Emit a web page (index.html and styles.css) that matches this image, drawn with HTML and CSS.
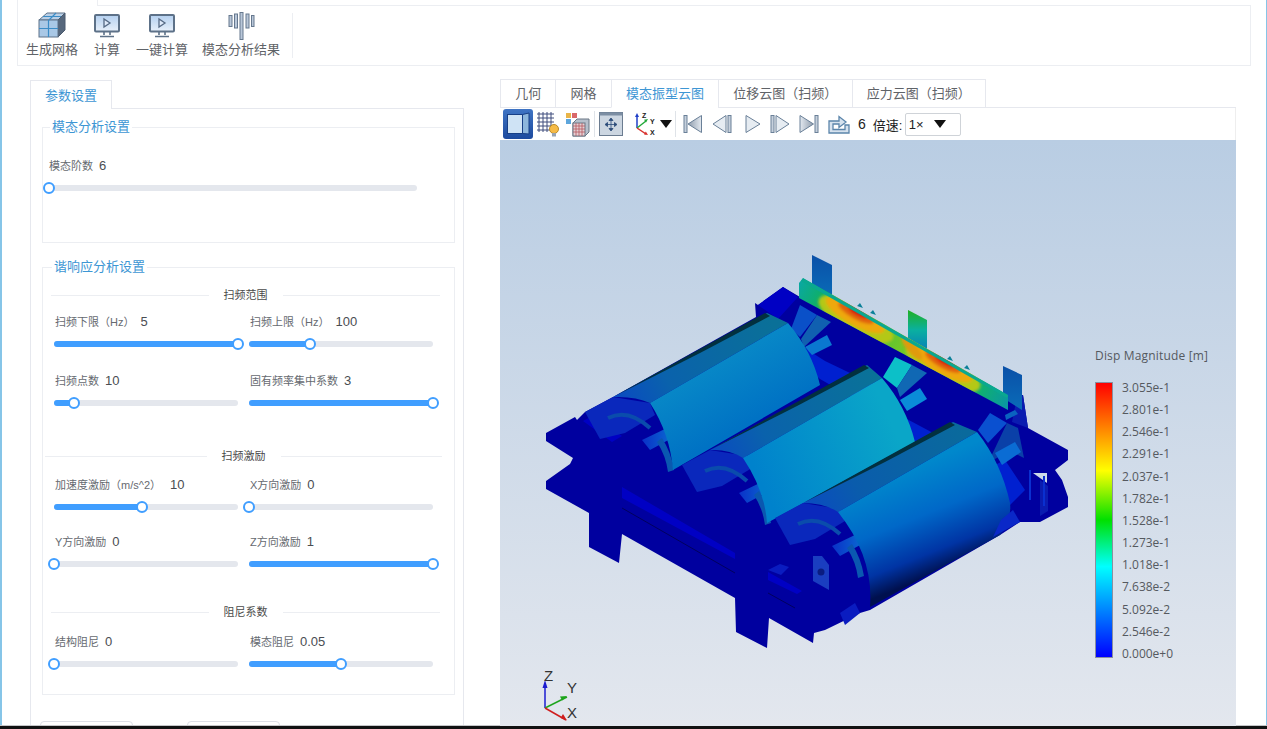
FILE: index.html
```html
<!DOCTYPE html>
<html lang="zh-CN">
<head>
<meta charset="utf-8">
<title>模态分析</title>
<link rel="stylesheet" href="styles.css">
</head>
<body>
<div class="screen">
<div class="app">
  <header class="ribbon-wrap">
    <div class="ribbon-head"><div class="stub"></div><div class="stub-rest"></div></div>
    <div class="ribbon">
      <div class="tool">
        <svg class="tool-icon" width="28" height="26" viewBox="0 0 28 26"><path d="M1 8 9 1h18l-7 7z" fill="#b9cfe6" stroke="#5f7389"/><path d="M20 8l7-7v17l-7 7z" fill="#56677c" stroke="#4a5a6e"/><rect x="1" y="8" width="19" height="17" fill="#a9c8e6" stroke="#5f7389"/><path d="M10.500 8v17M1 16.500h19M5 4.500h18M18 1l-7 7" stroke="#3b8cc6" stroke-width="1.200" fill="none"/></svg>
        <span>生成网格</span>
      </div>
      <div class="tool">
        <svg class="tool-icon tool-icon-low" width="26" height="24" viewBox="0 0 26 24"><defs><linearGradient id="scr" x1="0" y1="0" x2="0" y2="1"><stop offset="0" stop-color="#b4d0f0"/><stop offset="1" stop-color="#e8f0fa"/></linearGradient></defs><rect x="1" y="1" width="24" height="16.500" rx="1" fill="url(#scr)" stroke="#5d7188" stroke-width="2"/><path d="M10 5v8l6-4z" fill="#dfeafa" stroke="#566a85" stroke-width="1.300"/><path d="M10 18v3M16 18v3M6 22.500h14" stroke="#5d7188" stroke-width="1.600"/></svg>
        <span>计算</span>
      </div>
      <div class="tool">
        <svg class="tool-icon tool-icon-low" width="26" height="24" viewBox="0 0 26 24"><rect x="1" y="1" width="24" height="16.500" rx="1" fill="url(#scr)" stroke="#5d7188" stroke-width="2"/><path d="M10 5v8l6-4z" fill="#dfeafa" stroke="#566a85" stroke-width="1.300"/><path d="M10 18v3M16 18v3M6 22.500h14" stroke="#5d7188" stroke-width="1.600"/></svg>
        <span>一键计算</span>
      </div>
      <div class="tool tool-wide">
        <svg class="tool-icon" width="27" height="28" viewBox="0 0 27 28" fill="#b9c7d9" stroke="#66788e" stroke-width="1"><rect x="1" y="3.500" width="3" height="11"/><rect x="6.500" y="2" width="3" height="14"/><rect x="12" y="0.500" width="3" height="27"/><rect x="18" y="2" width="3" height="14"/><rect x="23.500" y="3.500" width="2.500" height="11"/></svg>
        <span>模态分析结果</span>
      </div>
      <div class="ribbon-sep"></div>
    </div>
  </header>

  <main class="workspace">
    <section class="left">
      <div class="left-tabs"><div class="left-tab">参数设置</div><div class="left-tabs-rest"></div></div>
      <div class="panel">
        <fieldset class="group group-modal">
          <legend>模态分析设置</legend>
          <div class="field field-solo">
            <div class="label-row"><span class="lab">模态阶数</span><span class="val">6</span></div>
            <div class="slider"><div class="fill" style="width:0%"></div><div class="thumb" style="left:0%"></div></div>
          </div>
        </fieldset>

        <fieldset class="group group-harm">
          <legend>谐响应分析设置</legend>
          <div class="divider div-first"><span>扫频范围</span></div>
          <div class="fields fields-a">
            <div class="field"><div class="label-row"><span class="lab">扫频下限（Hz）</span><span class="val val-wide">5</span></div><div class="slider"><div class="fill" style="width:100%"></div><div class="thumb" style="left:100%"></div></div></div>
            <div class="field"><div class="label-row"><span class="lab">扫频上限（Hz）</span><span class="val val-wide">100</span></div><div class="slider"><div class="fill" style="width:33%"></div><div class="thumb" style="left:33%"></div></div></div>
            <div class="field"><div class="label-row"><span class="lab">扫频点数</span><span class="val">10</span></div><div class="slider"><div class="fill" style="width:11%"></div><div class="thumb" style="left:11%"></div></div></div>
            <div class="field"><div class="label-row"><span class="lab">固有频率集中系数</span><span class="val">3</span></div><div class="slider"><div class="fill" style="width:100%"></div><div class="thumb" style="left:100%"></div></div></div>
          </div>
          <div class="divider div-second"><span>扫频激励</span></div>
          <div class="fields fields-b">
            <div class="field"><div class="label-row"><span class="lab">加速度激励（m/s^2）</span><span class="val val-accel">10</span></div><div class="slider"><div class="fill" style="width:48%"></div><div class="thumb" style="left:48%"></div></div></div>
            <div class="field"><div class="label-row"><span class="lab">X方向激励</span><span class="val">0</span></div><div class="slider"><div class="fill" style="width:0%"></div><div class="thumb" style="left:0%"></div></div></div>
            <div class="field"><div class="label-row"><span class="lab">Y方向激励</span><span class="val">0</span></div><div class="slider"><div class="fill" style="width:0%"></div><div class="thumb" style="left:0%"></div></div></div>
            <div class="field"><div class="label-row"><span class="lab">Z方向激励</span><span class="val">1</span></div><div class="slider"><div class="fill" style="width:100%"></div><div class="thumb" style="left:100%"></div></div></div>
          </div>
          <div class="divider div-third"><span>阻尼系数</span></div>
          <div class="fields fields-c">
            <div class="field"><div class="label-row"><span class="lab">结构阻尼</span><span class="val">0</span></div><div class="slider"><div class="fill" style="width:0%"></div><div class="thumb" style="left:0%"></div></div></div>
            <div class="field"><div class="label-row"><span class="lab">模态阻尼</span><span class="val">0.05</span></div><div class="slider"><div class="fill" style="width:50%"></div><div class="thumb" style="left:50%"></div></div></div>
          </div>
        </fieldset>
        <div class="actions"><div class="btn"></div><div class="btn"></div></div>
      </div>
    </section>

    <section class="right">
      <nav class="tabs">
        <div class="tab">几何</div>
        <div class="tab">网格</div>
        <div class="tab tab-active">模态振型云图</div>
        <div class="tab">位移云图（扫频）</div>
        <div class="tab">应力云图（扫频）</div>
        <div class="tabs-rest"></div>
      </nav>
      <div class="toolbar">
        <div class="tb-group tb-g1">
          <div class="tb-active">
            <svg width="26" height="26" viewBox="0 0 26 26"><rect x="2.500" y="3.500" width="15" height="19" fill="#cfe3f5" stroke="#173f86"/><path d="M17.500 3.500 24 2v21l-6.500-.5z" fill="#8db6dc" stroke="#173f86"/></svg>
          </div>
          <svg width="24" height="26" viewBox="0 0 24 26"><path d="M1 3h17M1 7h17M1 11h17M1 15h17M1 19h14M3 1v20M7 1v20M11 1v20M15 1v18" stroke="#3f4c7c" stroke-width="1" fill="none"/><circle cx="18" cy="18" r="4.500" fill="#f6bb47" stroke="#b98b2a"/><rect x="16" y="22" width="4" height="3.500" fill="#98a4b4"/></svg>
          <svg class="tb-octree" width="25" height="26" viewBox="0 0 25 26"><rect x="1" y="2" width="5" height="5" fill="#e9b54a"/><rect x="7" y="2" width="5" height="5" fill="#d9686a"/><rect x="1" y="8" width="5" height="5" fill="#5da6dc"/><path d="M8 12 12 8h12v13l-4 4H8z" fill="#b6c0cc" stroke="#6a7684"/><rect x="8" y="12" width="12" height="13" fill="#e6cfd2" stroke="#6a7684"/><path d="M11 12v13M14 12v13M17 12v13M8 15h12M8 18h12M8 21h12" stroke="#b5595f" stroke-width=".8"/></svg>
        </div>
        <div class="tb-sep"></div>
        <div class="tb-group tb-g2">
          <svg width="24" height="24" viewBox="0 0 24 24"><rect x=".5" y=".5" width="23" height="23" fill="#ccd6e1" stroke="#6b7c90"/><rect x=".5" y=".5" width="23" height="3" fill="#7c8ea3"/><path d="M12 8v9M8 12.500h8M12 6l-2 2.500h4zM12 19l-2-2.500h4zM6 12.500l2.500-2v4zM18 12.500l-2.500-2v4z" stroke="#2a4a78" fill="#2a4a78" stroke-width=".8"/></svg>
          <div class="axes-pick">
            <svg class="axes-icon" width="25" height="24" viewBox="0 0 25 24"><path d="M5 16V4" stroke="#1f3fc8" stroke-width="1.500"/><path d="M5 1 3 5h4z" fill="#1f3fc8"/><path d="M5 16l9-7" stroke="#22a83a" stroke-width="1.500"/><path d="M16 7l-4 .8 2 2.600z" fill="#22a83a"/><path d="M5 16l9 6" stroke="#d8302c" stroke-width="1.500"/><path d="M16 23l-4-.6 1.800-2.800z" fill="#d8302c"/><text x="10" y="6" class="axis-mini">Z</text><text x="18" y="12" class="axis-mini">Y</text><text x="18" y="23" class="axis-mini">X</text></svg>
            <span class="caret"></span>
          </div>
        </div>
        <div class="tb-sep tb-sep-2"></div>
        <div class="tb-group tb-g3">
          <svg width="20" height="20" viewBox="0 0 20 20"><defs><linearGradient id="pl" x1="0" y1="0" x2="1" y2="0"><stop offset="0" stop-color="#8f9cac"/><stop offset="1" stop-color="#e3e9f0"/></linearGradient></defs><rect x="1" y="1.500" width="3" height="17" fill="#c6d0dc" stroke="#6a8098"/><path d="M18.500 1.500v17L5 10z" fill="url(#pl)" stroke="#6a8098"/></svg>
          <svg width="20" height="20" viewBox="0 0 20 20"><rect x="16" y="1.500" width="3" height="17" fill="#c6d0dc" stroke="#6a8098"/><path d="M14 1.500v17L1 10z" fill="#e6ecf2" stroke="#6a8098"/></svg>
          <svg class="pb-play" width="16" height="20" viewBox="0 0 16 20"><path d="M1 1.500v17L15 10z" fill="#e6ecf2" stroke="#6a8098"/></svg>
          <svg width="20" height="20" viewBox="0 0 20 20"><rect x="1" y="1.500" width="3" height="17" fill="#c6d0dc" stroke="#6a8098"/><path d="M6 1.500v17L19 10z" fill="#e6ecf2" stroke="#6a8098"/></svg>
          <svg width="20" height="20" viewBox="0 0 20 20"><defs><linearGradient id="pr" x1="0" y1="0" x2="1" y2="0"><stop offset="0" stop-color="#e3e9f0"/><stop offset="1" stop-color="#8f9cac"/></linearGradient></defs><path d="M1 1.500v17L14.500 10z" fill="url(#pr)" stroke="#6a8098"/><rect x="16" y="1.500" width="3" height="17" fill="#c6d0dc" stroke="#6a8098"/></svg>
          <svg width="22" height="20" viewBox="0 0 22 20"><path d="M1 19V7h10V2.500L18 8l-7 5.500V10H5v5.500h12V11h4v8z" fill="#d6e2ee" stroke="#5b85ab" stroke-width="1.300"/></svg>
        </div>
        <span class="frame-no">6</span>
        <span class="speed-label">倍速:</span>
        <div class="speed-select"><span>1×</span><span class="caret"></span></div>
      </div>

      <div class="viewport">
        <svg class="scene" width="736" height="587" viewBox="500 140 736 587">
          <defs>
            <linearGradient id="g1" gradientUnits="userSpaceOnUse" x1="700" y1="345" x2="745" y2="425"><stop offset="0" stop-color="#0a8fc8"/><stop offset="1" stop-color="#0072c4"/></linearGradient>
            <linearGradient id="g2" gradientUnits="userSpaceOnUse" x1="760" y1="480" x2="890" y2="420"><stop offset="0" stop-color="#0082cc"/><stop offset="1" stop-color="#0aa6c8"/></linearGradient>
            <linearGradient id="g3" gradientUnits="userSpaceOnUse" x1="905" y1="470" x2="945" y2="570"><stop offset="0" stop-color="#0088cc"/><stop offset=".45" stop-color="#0068c8"/><stop offset=".8" stop-color="#0034a4"/><stop offset="1" stop-color="#00104e"/></linearGradient>
            <linearGradient id="band1" gradientUnits="userSpaceOnUse" x1="620" y1="400" x2="770" y2="320"><stop offset="0" stop-color="#0a4cc0"/><stop offset=".3" stop-color="#0a62ac"/><stop offset="1" stop-color="#0a7098"/></linearGradient>
            <linearGradient id="band2" gradientUnits="userSpaceOnUse" x1="715" y1="455" x2="870" y2="370"><stop offset="0" stop-color="#0a4cc0"/><stop offset=".3" stop-color="#0a62ac"/><stop offset="1" stop-color="#0a7298"/></linearGradient>
            <linearGradient id="band3" gradientUnits="userSpaceOnUse" x1="810" y1="510" x2="960" y2="425"><stop offset="0" stop-color="#0a4cc0"/><stop offset=".3" stop-color="#0a5cac"/><stop offset="1" stop-color="#0a6a9c"/></linearGradient>
            <linearGradient id="tab2" x1="0" y1="0" x2="0" y2="1"><stop offset="0" stop-color="#20b020"/><stop offset=".5" stop-color="#0ab0a0"/><stop offset="1" stop-color="#0a80b8"/></linearGradient>
            <linearGradient id="tabb" x1="0" y1="0" x2="0" y2="1"><stop offset="0" stop-color="#0a50a8"/><stop offset="1" stop-color="#0a6cb8"/></linearGradient>
            <linearGradient id="plate" gradientUnits="userSpaceOnUse" x1="799" y1="285" x2="1008" y2="400"><stop offset="0" stop-color="#0aa8a0"/><stop offset=".12" stop-color="#10b060"/><stop offset=".5" stop-color="#70c828"/><stop offset=".88" stop-color="#10b070"/><stop offset="1" stop-color="#0a98a0"/></linearGradient>
            <linearGradient id="brk" x1="0" y1="0" x2="1" y2="0"><stop offset="0" stop-color="#0a30c8"/><stop offset="1" stop-color="#0a6ad0"/></linearGradient>
            <clipPath id="plateClip"><path d="M799 283l4-5 205 117v15L799 298z"/></clipPath>
            <filter id="soft" x="-30%" y="-60%" width="160%" height="220%"><feGaussianBlur stdDeviation="1.800"/></filter>
            <g id="end">
              <path d="M585 412l28-15 37 6 5 12-30 18-25 6z" fill="#0a28bc"/>
              <path d="M608 418q20-10 42 10" fill="none" stroke="#0a4cac" stroke-width="4"/>
              <path d="M642 440l25-12 5 10-22 12z" fill="url(#brk)"/>
              <path d="M662 438q9 14 12 32l-6 2q-2-16-11-30z" fill="#0a58b0"/>
            </g>
          </defs>

          <path fill="#00009f" d="M546 433 575 417l2 3 8-8 28-15 143-80-1-14 3 2 25-18 17 10 208 98h15l5 33 40 22v10l-13 10 7 10 6 17v10l-28 15h-20l-20 13-130 75-10 3-35 17-11 3-1 10-44-25-2 30-31-16-1-34-113-64-3 29-30-16v-34l-43-24v-8l24-17 3-6-27-17z"/>
          <path fill="#cddae8" d="M1033 473h14v10z"/>

          <path fill="#0000c4" d="M583 421l9-5 30 20-10 6zM622 487l113 66v6l-113-61zM768 572l34 19-5 3-29-14zM758 305l25-18 15 10-20 22z"/>
          <path fill="none" stroke="#00005e" stroke-width="1" d="M622 508l113 65M768 593l27 15"/>

          <path fill="#0020d0" d="M800 345l25 16 50 24-20 14-35-20-22-20zM890 410l30 16 30 16-20 12-40-30zM985 470l20-10 20 30-20 20z"/>
          <path fill="#0a1cb0" d="M1023 395l5 33-16-6 5-25zM1040 480l8 6v25l-8 5z"/>
          <path fill="#0a2ed0" d="M1030 470v30M1044 476v30" stroke="#0a30d0" stroke-width="2"/>

          <path fill="url(#tabb)" d="M812 255l20 10v33l-20-13z"/>
          <path fill="url(#tab2)" d="M908 310l19 10v30l-19-12z"/>
          <path fill="url(#tabb)" d="M1003 366l19 9v35l-19-12z"/>
          <g fill="#0a8098"><path d="M857 306l3-3 3 5zM870 313l3-3 3 5zM947 359l3-3 3 5zM964 368l3-3 3 5z"/></g>

          <path fill="#0a50c8" d="M800 305l17 10-17 22-9-8z"/>
          <path fill="#1060b0" d="M817 315l14 7-27 25-3-8z"/>
          <path fill="#0a78d0" d="M805 347l22-12 5 10-20 10z"/>
          <path fill="#0cc0c8" d="M895 357l17 8-15 23-14-11z"/>
          <path fill="#1068b4" d="M912 365l15 8-27 24-3-9z"/>
          <path fill="#0a8cd8" d="M900 400l20-12 7 11-20 12z"/>
          <path fill="#0a50d0" d="M990 413l17 10-19 20-10-13z"/>
          <path fill="#0a40a8" d="M1007 423l11 5 6 30-8-4-2-6-26 15z"/>
          <path fill="#0a6cd4" d="M995 453l20-11 6 10-19 13z"/>
          <path fill="#0a62c0" d="M1005 415l10-5 3 4-12 6z"/>

          <path fill="url(#plate)" d="M799 283l4-5 205 117v15L799 298z"/>
          <g clip-path="url(#plateClip)">
            <g filter="url(#soft)">
              <ellipse cx="856" cy="319" rx="42" ry="15" transform="rotate(29 856 319)" fill="#b4c818"/>
              <ellipse cx="943" cy="368" rx="42" ry="15" transform="rotate(29 943 368)" fill="#b4c818"/>
              <ellipse cx="855" cy="315" rx="33" ry="10" transform="rotate(29 855 315)" fill="#eea808"/>
              <ellipse cx="943" cy="364" rx="33" ry="10" transform="rotate(29 943 364)" fill="#eea808"/>
              <ellipse cx="912" cy="348" rx="15" ry="5" transform="rotate(50 912 348)" fill="#e09a10"/>
              <ellipse cx="856" cy="313" rx="20" ry="6" transform="rotate(29 856 313)" fill="#e06008"/>
              <ellipse cx="943" cy="362" rx="20" ry="6" transform="rotate(29 943 362)" fill="#e06008"/>
              <ellipse cx="858" cy="312" rx="11" ry="3.500" transform="rotate(29 858 312)" fill="#d81808"/>
              <ellipse cx="945" cy="361" rx="11" ry="3.500" transform="rotate(29 945 361)" fill="#d81808"/>
            </g>
            <path d="M803 278l205 117-1 3L801 281z" fill="#0aa890"/>
          </g>

          <path d="M768 570l12-6 9 3-8 8z" fill="#0a1cc0"/>

          <use href="#end"/>
          <path fill="url(#band1)" d="M613 397 767 313l21 10-138 80q-15-7-37-6z"/>
          <path fill="#02303f" d="M615 396 765 313l5 3-70 37z"/>
          <path fill="url(#g1)" d="M650 403 788 323q24 28 32 62L673 470q-3-36-23-67z"/>

          <use href="#end" transform="translate(97 53)"/>
          <path fill="url(#band2)" d="M710 450 867 365l15 13-139 80q-14-9-33-8z"/>
          <path fill="#02303f" d="M712 449 864 365l5 3-72 38z"/>
          <path fill="url(#g2)" d="M743 458 882 378q24 28 33 64L767 523q-2-32-24-65z"/>

          <use href="#end" transform="translate(190 106)"/>
          <path fill="url(#band3)" d="M803 503 953 422l24 10-139 80q-14-9-35-9z"/>
          <path fill="#02303f" d="M805 502 950 422l5 3-70 37z"/>
          <path fill="url(#g3)" d="M838 512 977 432q24 30 33 71 2 18-10 32L870 607q4-50-32-95z"/>

          <path fill="#0a28c8" d="M993 537l27-15-7-12-12 10z"/>
          <path fill="#1a3ec0" d="M813 556h9l7 9v25l-16-9z"/>
          <circle cx="821" cy="572" r="3.500" fill="#0a1c80"/>
          <path fill="#0a1cc0" d="M845 625l15-12-5-10-15 10z"/>

          <g class="triad">
            <path d="M545 708v-24" stroke="#1c1cd0" stroke-width="1.500"/><path d="M545 680l-2.500 8h5z" fill="#1c1cd0"/>
            <path d="M545 708l22-11" stroke="#1da51d" stroke-width="1.500"/><path d="M567 696l-7 .5 2.200 4z" fill="#1da51d"/>
            <path d="M545 708l21 12" stroke="#cf1e1e" stroke-width="1.500"/><path d="M567 720.500l-4-6.500-2.400 4z" fill="#cf1e1e"/>
            <text x="544" y="681" class="axis-label">Z</text>
            <text x="567" y="693" class="axis-label">Y</text>
            <text x="567" y="718" class="axis-label">X</text>
          </g>
        </svg>
        <aside class="legend">
          <div class="legend-title">Disp Magnitude [m]</div>
          <div class="legend-body">
            <div class="legend-bar"></div>
            <div class="legend-labels">
              <span>3.055e-1</span><span>2.801e-1</span><span>2.546e-1</span><span>2.291e-1</span><span>2.037e-1</span><span>1.782e-1</span><span>1.528e-1</span><span>1.273e-1</span><span>1.018e-1</span><span>7.638e-2</span><span>5.092e-2</span><span>2.546e-2</span><span>0.000e+0</span>
            </div>
          </div>
        </aside>
      </div>
    </section>
  </main>
</div>
<div class="taskbar"></div>
</div>
</body>
</html>
```
FILE: styles.css
```css
* { box-sizing: border-box; }
html, body { margin: 0; padding: 0; height: 100%; }
body {
  background: #fff;
  font-family: "Liberation Sans", "Noto Sans CJK SC", sans-serif;
  color: #606266;
  overflow: hidden;
}
.screen { width: 1267px; height: 729px; display: flex; flex-direction: column; }
.app {
  flex: 1;
  min-height: 0;
  overflow: hidden;
  border-left: 2px solid #86c5e8;
  border-right: 1px solid #86c5e8;
}
.taskbar { height: 3px; background: #111; box-shadow: 0 -1px 0 #c4c6c8; flex: none; }

/* ribbon */
.ribbon-wrap { margin: 0 15px; width: 1234px; }
.ribbon-head { display: flex; height: 6px; }
.stub { width: 81px; border-left: 1px solid #eceef2; border-right: 1px solid #eceef2; }
.stub-rest { flex: 1; border-bottom: 1px solid #eceef2; }
.ribbon {
  height: 60px;
  display: flex;
  align-items: flex-start;
  border: 1px solid #eceef2;
  border-top: 0;
}
.tool {
  display: flex;
  flex-direction: column;
  align-items: center;
  padding: 0 8px;
  height: 52px;
  font-size: 13px;
  color: #5f6368;
}
.tool span { line-height: 16px; margin-top: auto; }
.tool-icon { display: block; margin-top: 6px; }
.tool-icon-low { margin-top: 8px; }
.tool-wide { padding: 0 12px 0 6px; }
.ribbon-sep { width: 1px; height: 45px; margin-top: 7px; background: #eceef2; }

/* workspace */
.workspace { display: flex; margin-top: 14px; padding-left: 28px; }
.left { width: 434px; flex: none; }
.right { width: 737px; margin-left: 35px; margin-top: -1px; flex: none; }

.left-tabs { display: flex; height: 29px; }
.left-tab {
  width: 82px;
  height: 29px;
  border: 1px solid #e6e8ee;
  border-bottom: 0;
  color: #3d96d4;
  font-size: 13px;
  line-height: 29px;
  text-align: center;
  background: #fff;
}
.left-tabs-rest { flex: 1; border-bottom: 1px solid #e6e8ee; }
.panel {
  border: 1px solid #e6e8ee;
  border-top: 0;
  padding: 8px 8px 20px 11px;
  height: 680px;
}
.group {
  margin: 0;
  padding: 0;
  border: 1px solid #eceef2;
  min-width: 0;
}
.group legend {
  margin-left: 1px;
  padding: 0 2px;
  font-size: 13px;
  line-height: 20px;
  color: #3d96d4;
}
.group-modal { padding: 18px 0 51px 6px; }
.group-harm { margin-top: 14px; padding: 0 14px 23px 8px; }

.divider { display: flex; align-items: center; height: 14px; font-size: 11px; color: #4a4a4a; }
.divider::before, .divider::after { content: ""; flex: 1; height: 1px; background: #eceef2; }
.divider span { padding: 0 15px; line-height: 14px; }
.div-first { margin-top: 11px; }
.div-second { margin: 20px -2px 0 -6px; }
.div-third { margin-top: 0; }

.fields { display: grid; grid-template-columns: 184px 184px; column-gap: 11px; margin-left: 3px; }
.fields-a { margin-top: 9px; grid-auto-rows: 59px; }
.fields-b { margin-top: 11px; margin-bottom: 17px; grid-auto-rows: 57px; }
.fields-c { margin-top: 12px; grid-auto-rows: 40px; }

.label-row { display: flex; align-items: center; height: 20px; padding-left: 1px; white-space: nowrap; }
.lab { font-size: 11px; color: #666a70; }
.val { font-size: 13px; color: #4a4d52; margin-left: 6px; }
.val-wide { margin-left: 6px; }
.val-accel { margin-left: 9px; }
.slider { position: relative; height: 6px; margin-top: 10px; background: #e4e7ed; border-radius: 3px; }
.fill { height: 6px; background: #409eff; border-radius: 3px; }
.thumb {
  position: absolute;
  top: -3px;
  width: 12px;
  height: 12px;
  margin-left: -6px;
  background: #fff;
  border: 2px solid #409eff;
  border-radius: 50%;
}
.field-solo { width: 368px; }
.field-solo .label-row { padding-left: 0; }

.actions { display: flex; gap: 54px; margin-top: 26px; margin-left: -2px; }
.btn { width: 93px; height: 32px; border: 1px solid #dcdfe6; border-radius: 4px; background: #fff; }

/* right */
.tabs { display: flex; height: 29px; padding-left: 1px; }
.tab {
  height: 29px;
  padding: 0 14.2px;
  border: 1px solid #e6e8ee;
  border-right: 0;
  font-size: 13px;
  line-height: 28px;
  color: #5f6368;
  white-space: nowrap;
}
.tab:nth-child(5) { border-right: 1px solid #e6e8ee; }
.tab-active { color: #3d96d4; border-bottom-color: #fff; }
.tabs-rest { flex: 1; border-bottom: 1px solid #e6e8ee; }

.toolbar {
  height: 32px;
  display: flex;
  align-items: center;
  padding-left: 3px;
  margin-left: 1px;
  border-right: 1px solid #eee;
}
.toolbar svg { display: block; flex: none; }
.tb-group { display: flex; align-items: center; }
.tb-g1 { gap: 3px; }
.tb-g2 { gap: 9px; }
.tb-g3 { gap: 9px; margin-left: 3px; }
.tb-octree { margin-left: 2px; }
.tb-sep { width: 1px; height: 26px; background: #dfe3e8; margin: 0 4px 0 4px; }
.tb-sep-2 { margin: 0 4px 0 7px; }
.pb-play { margin-left: 4px; }
.tb-active {
  width: 30px;
  height: 30px;
  background: linear-gradient(#3f74c4, #1c4a9e);
  border-radius: 3px;
  display: flex;
  align-items: center;
  justify-content: center;
}
.axes-pick { display: flex; align-items: center; gap: 3px; width: 36px; }
.caret {
  display: inline-block;
  width: 0;
  height: 0;
  border-left: 6px solid transparent;
  border-right: 6px solid transparent;
  border-top: 8px solid #111;
}
.axis-mini { font: bold 7px "Liberation Sans", sans-serif; fill: #222; }
.frame-no { font-size: 14px; color: #222; margin-left: 8px; }
.speed-label { font-size: 13px; color: #222; margin-left: 7px; width: 32px; white-space: nowrap; }
.speed-select {
  width: 56px;
  height: 23px;
  border: 1px solid #cfd3d8;
  border-radius: 2px;
  display: flex;
  align-items: center;
  justify-content: space-between;
  padding: 0 14px 0 3px;
  font-size: 13px;
  color: #222;
  background: #fff;
}

.viewport {
  position: relative;
  margin-left: 1px;
  height: 587px;
  background: linear-gradient(#b9cde3, #e3e7ee);
  overflow: hidden;
}
.scene { position: absolute; left: 0; top: 0; display: block; }
.axis-label { font: 15px "Liberation Sans", sans-serif; fill: #333; }

.legend { position: absolute; left: 595px; top: 207px; color: #55595f; font-family: "Open Sans", sans-serif; font-size: 12px; }
.legend-title { line-height: 18px; white-space: nowrap; letter-spacing: .17px; }
.legend-body { display: flex; margin-top: 17px; height: 276px; }
.legend-bar {
  width: 18px;
  height: 276px;
  border: 1px solid #8a8fa0;
  background: linear-gradient(#ff0000 0%, #ffff00 32%, #00e000 50%, #00ffff 67%, #0000ff 100%);
}
.legend-labels {
  margin-left: 9px;
  margin-top: -3px;
  height: 284px;
  display: flex;
  flex-direction: column;
  justify-content: space-between;
  line-height: 18px;
}
```
